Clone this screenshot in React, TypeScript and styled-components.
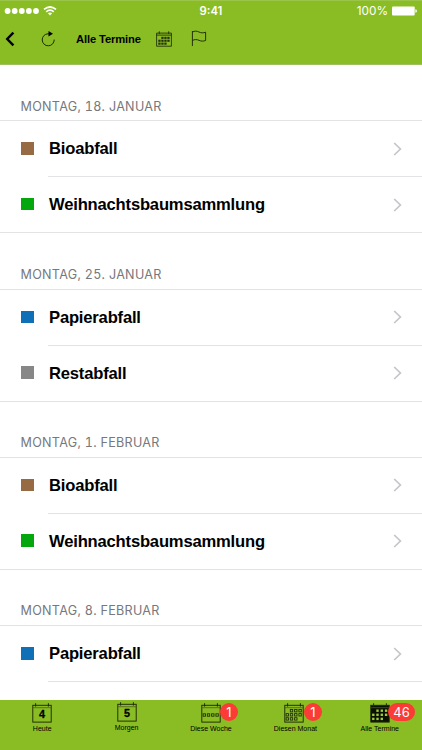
import React from "react";
import styled, { createGlobalStyle } from "styled-components";

const Global = createGlobalStyle`
  * { box-sizing: border-box; }
  body { margin: 0; background: #fff; }
`;

const Screen = styled.div`
  width: 422px;
  height: 750px;
  display: flex;
  flex-direction: column;
  overflow: hidden;
  background: #fff;
  color: #000;
  font-family: "Liberation Sans", Arial, sans-serif;
`;

const Header = styled.header`
  flex: none;
  height: 65px;
  background: #8abd24;
  border-top: 1px solid #9bc548;
  border-bottom: 1px solid #a0bf62;
`;

const StatusBar = styled.div`
  height: 20px;
  display: grid;
  grid-template-columns: 1fr auto 1fr;
  align-items: center;
  padding: 0 5px 0 4px;
  color: #fff;
  font-family: Inter, sans-serif;
`;

const Signal = styled.div`
  display: flex;
  align-items: center;
  gap: 3px;
`;

const Clock = styled.div`
  font-size: 11.3px;
  font-weight: 600;
  line-height: 20px;
  padding-left: 1px;
`;

const Power = styled.div`
  display: flex;
  justify-content: flex-end;
  align-items: center;
  gap: 4px;
  font-size: 11.8px;
  line-height: 20px;
`;

const Toolbar = styled.nav`
  height: 35px;
  display: flex;
  align-items: center;
  padding-left: 5px;
`;

const ToolButton = styled.button<{ $gap: number; $lift?: number }>`
  display: flex;
  padding: 0 0 ${(p) => p.$lift ?? 0}px;
  border: 0;
  background: none;
  margin-right: ${(p) => p.$gap}px;
`;

const Title = styled.h1`
  margin: 0 15px 0 0;
  width: 65px;
  white-space: nowrap;
  font-size: 11.2px;
  font-weight: bold;
  line-height: 16px;
  letter-spacing: -0.12px;
`;

const List = styled.main`
  flex: 1;
  min-height: 0;
  overflow: hidden;
`;

const SectionTitle = styled.h2`
  margin: 0;
  height: 56.3px;
  padding: 33.6px 0 0 20.5px;
  border-bottom: 1px solid #e3e3e5;
  color: #77777c;
  font: 400 12.6px/16px Inter, sans-serif;
  font-variant-numeric: tabular-nums;
  letter-spacing: 0.28px;
`;

const Row = styled.div<{ $closing: boolean }>`
  height: 56px;
  display: flex;
  padding-left: 21px;
  border-bottom: ${(p) => (p.$closing ? "1px solid #e3e3e5" : "none")};
`;

const Swatch = styled.i<{ $color: string }>`
  flex: none;
  align-self: center;
  width: 12.5px;
  height: 12.5px;
  margin: 0 14.5px 1.5px 0;
  background: ${(p) => p.$color};
`;

const RowBody = styled.div<{ $divider: boolean }>`
  flex: 1;
  display: flex;
  align-items: center;
  justify-content: space-between;
  padding: 0 20px 0 1px;
  border-bottom: ${(p) => (p.$divider ? "1px solid #e3e3e5" : "none")};
  white-space: nowrap;
`;

const Name = styled.span`
  padding-top: 1px;
  font-size: 16.6px;
  line-height: 20px;
  font-weight: bold;
  letter-spacing: -0.19px;
`;

const TabBar = styled.footer`
  flex: none;
  height: 50px;
  display: grid;
  grid-template-columns: repeat(5, 1fr);
  background: #8abd24;
`;

const Tab = styled.div<{ $top: number }>`
  display: flex;
  flex-direction: column;
  align-items: center;
  padding-top: ${(p) => p.$top}px;
  font-size: 7px;
  line-height: 10px;
  white-space: nowrap;
`;

const TabIcon = styled.div<{ $shift: number }>`
  position: relative;
  height: 21px;
  margin-right: ${(p) => p.$shift}px;
`;

const Badge = styled.span<{ $left: number }>`
  position: absolute;
  left: ${(p) => p.$left}px;
  top: 0;
  min-width: 18px;
  height: 18px;
  padding: 0 5px;
  border-radius: 9px;
  background: #fb3b35;
  color: #fff;
  text-align: center;
  font: 400 13px/18px Inter, sans-serif;
`;

const Wifi = () => (
  <svg width="14" height="10" viewBox="0 0 14 10" fill="none" stroke="#fff" strokeWidth="1.7">
    <path d="M1 3.4Q7-1.4 13 3.4M3.2 5.8Q7 2.6 10.8 5.8" />
    <path d="M4.9 7.3Q7 5.6 9.1 7.3L7 9.6Z" fill="#fff" stroke="none" />
  </svg>
);

const Dots = () => (
  <svg width="36" height="8" viewBox="0 0 36 8" fill="#fff">
    {[3.6, 10.7, 17.8, 24.9, 32].map((x) => <circle key={x} cx={x} cy="4" r="2.9" />)}
  </svg>
);

const Battery = () => (
  <svg width="25" height="10" viewBox="0 0 25 10" fill="#fff">
    <rect x="0" y="0.5" width="22.7" height="9" rx="1" />
    <path d="M23.4 3.2q1.5.3 1.5 1.8t-1.5 1.8z" />
  </svg>
);

const BackIcon = () => (
  <svg width="11" height="16" viewBox="0 0 11 16" fill="none" stroke="#000" strokeWidth="2.4">
    <path d="M8.4 1.6 2.2 8l6.2 6.4" />
  </svg>
);

const ReloadIcon = () => (
  <svg width="15" height="18" viewBox="0 0 15 18">
    <path d="M8.5 3.8H7A6 6 0 1 0 13.2 9.6" fill="none" stroke="#1c2a08" strokeWidth="1" />
    <path d="M7.5 1 12 3.8 7.5 6.5Z" />
  </svg>
);

const FlagIcon = () => (
  <svg width="17" height="17" viewBox="0 0 17 17" fill="none" stroke="#1c2a08" strokeWidth="0.95">
    <path d="M1.4 1v15M1.4 2.1C3.6.8 5.8.9 8 2s4.2 1.1 6.6.2v8.3c-2.4.9-4.4.8-6.6-.2s-4.4-1-6.6.2" />
  </svg>
);

type CalendarKind = "day" | "week" | "month" | "all";

const COLUMNS = [3.3, 7.5, 11.8, 16.1];
const ROWS = [7.7, 11.8, 15.9];
const MONTH_CELLS = ROWS.flatMap((y, r) =>
  COLUMNS.filter((_, c) => !(r === 0 && c === 0) && !(r === 2 && c === 3)).map((x) => [x, y]),
);
const WEEK_CELLS = COLUMNS.map((x) => [x, 12]);

function CalendarIcon({ kind, day }: { kind: CalendarKind; day?: string }) {
  const dark = kind === "all";
  const cells = kind === "week" ? WEEK_CELLS : MONTH_CELLS;
  return (
    <svg width="20" height="20" viewBox="0 0 20 20" fill="none" stroke="#1c2a08" strokeWidth="0.95">
      <rect x="0.8" y="2.3" width="18.4" height="16.8" fill={dark ? "#0b1002" : "none"} />
      <path d="M3.6 0.2v3.4M16.4 0.2v3.4" />
      <path d="M1.2 4.7h17.6" stroke={dark ? "#587a17" : "#34460f"} strokeWidth="0.6" />
      {kind === "day" ? (
        <text x="10" y="15.2" textAnchor="middle" fill="#000" stroke="#000" strokeWidth="0.3"
          fontFamily="Liberation Sans, Arial, sans-serif" fontWeight="bold" fontSize="10.8">{day}</text>
      ) : (
        cells.map(([x, y]) => (
          <rect key={`${x}-${y}`} x={x - 1.2} y={y - 1.2} width="2.4" height="2.4"
            fill={dark ? "#9ccb3c" : "none"} stroke={dark ? "none" : "#1c2a08"} strokeWidth="0.85" />
        ))
      )}
    </svg>
  );
}

const SmallCalendar = () => (
  <svg width="16" height="16" viewBox="0 0 16 16" fill="none" stroke="#1c2a08" strokeWidth="0.85">
    <path d="M.6 2.1h14.8v13.1H.6zM.6 4.1h14.8M3.3.3v2.7M12.7.3v2.7" />
    <g fill="#223109" stroke="none">
      {[[5.3, 5.8], [8.3, 5.8], [11.3, 5.8], [2.3, 8.7], [5.3, 8.7], [8.3, 8.7], [11.3, 8.7], [2.3, 11.6], [5.3, 11.6], [8.3, 11.6]].map(([x, y]) => (
        <rect key={`${x}-${y}`} x={x} y={y} width="2.3" height="2.1" />
      ))}
    </g>
  </svg>
);

const Chevron = () => (
  <svg width="9" height="14" viewBox="0 0 9 14" fill="none" stroke="#c5c5ca" strokeWidth="1.7">
    <path d="m1.2 1 6.2 6-6.2 6" />
  </svg>
);

const BROWN = "#966b44";
const GREEN = "#05a70e";
const BLUE = "#1070b7";
const GREY = "#878787";

const sections = [
  { date: "MONTAG, 18. JANUAR", items: [["Bioabfall", BROWN], ["Weihnachtsbaumsammlung", GREEN]] },
  { date: "MONTAG, 25. JANUAR", items: [["Papierabfall", BLUE], ["Restabfall", GREY]] },
  { date: "MONTAG, 1. FEBRUAR", items: [["Bioabfall", BROWN], ["Weihnachtsbaumsammlung", GREEN]] },
  { date: "MONTAG, 8. FEBRUAR", items: [["Papierabfall", BLUE]] },
];

type TabItem = {
  label: string;
  kind: CalendarKind;
  day?: string;
  badge?: string;
  badgeLeft?: number;
  top?: number;
  shift?: number;
};

const tabs: TabItem[] = [
  { label: "Heute", kind: "day", day: "4" },
  { label: "Morgen", kind: "day", day: "5", top: 2.4 },
  { label: "Diese Woche", kind: "week", badge: "1", badgeLeft: 19 },
  { label: "Diesen Monat", kind: "month", badge: "1", badgeLeft: 20, shift: 3 },
  { label: "Alle Termine", kind: "all", badge: "46", badgeLeft: 18.5 },
];

export default function App() {
  return (
    <>
      <Global />
      <Screen>
        <Header>
          <StatusBar>
            <Signal><Dots /><Wifi /></Signal>
            <Clock>9:41</Clock>
            <Power>100%<Battery /></Power>
          </StatusBar>
          <Toolbar>
            <ToolButton $gap={25} aria-label="Zurück"><BackIcon /></ToolButton>
            <ToolButton $gap={20} aria-label="Neu laden"><ReloadIcon /></ToolButton>
            <Title>Alle Termine</Title>
            <ToolButton $gap={19} aria-label="Kalender"><SmallCalendar /></ToolButton>
            <ToolButton $gap={0} $lift={1} aria-label="Markieren"><FlagIcon /></ToolButton>
          </Toolbar>
        </Header>
        <List>
          {sections.map((s) => (
            <section key={s.date}>
              <SectionTitle>{s.date}</SectionTitle>
              {s.items.map(([name, color], i) => (
                <Row key={name} $closing={i === 1}>
                  <Swatch $color={color} />
                  <RowBody $divider={i === 0}><Name>{name}</Name><Chevron /></RowBody>
                </Row>
              ))}
            </section>
          ))}
        </List>
        <TabBar>
          {tabs.map((t) => (
            <Tab key={t.label} $top={t.top ?? 3}>
              <TabIcon $shift={t.shift ?? 0}>
                <CalendarIcon kind={t.kind} day={t.day} />
                {t.badge && <Badge $left={t.badgeLeft ?? 18}>{t.badge}</Badge>}
              </TabIcon>
              {t.label}
            </Tab>
          ))}
        </TabBar>
      </Screen>
    </>
  );
}
